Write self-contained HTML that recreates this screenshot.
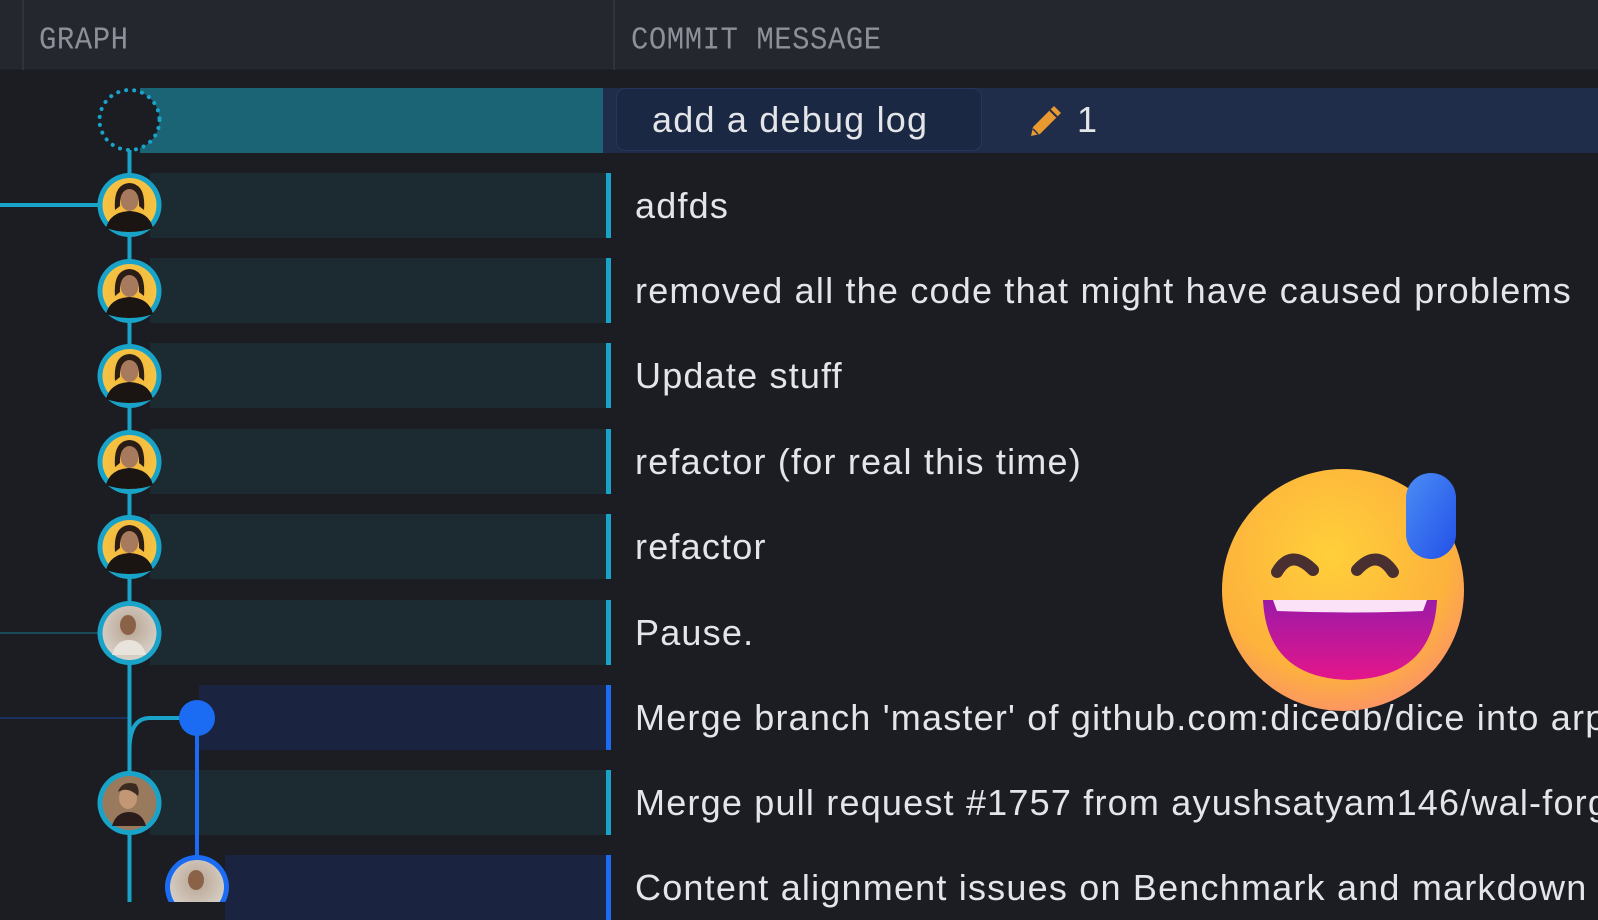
<!DOCTYPE html>
<html><head><meta charset="utf-8"><style>
*{margin:0;padding:0;box-sizing:border-box}
body{width:1598px;height:902px;overflow:hidden;background:#1b1d23;position:relative;font-family:"Liberation Sans","Noto Sans CJK JP",sans-serif}
.hdr{position:absolute;left:0;top:0;width:1598px;height:70px;background:#25272e;border-bottom:1px solid #1f2126}
.hdr span{position:absolute;top:24px;font-family:"Liberation Mono",monospace;font-size:29px;color:#8d9099;letter-spacing:0.5px;transform:scaleY(1.08)}
.vl{position:absolute;top:0;height:70px;width:2px;background:#30333b}
.band{position:absolute;height:65px}
.bar{position:absolute;width:5px;height:65px}
.msg{position:absolute;left:635px;font-size:36px;color:#e4e5e8;letter-spacing:1.2px;white-space:nowrap;line-height:40px}
</style></head><body>
<div class="hdr"><div class="vl" style="left:22px"></div><div class="vl" style="left:613px"></div>
<span style="left:39px">GRAPH</span><span style="left:631px">COMMIT MESSAGE</span></div>

<div class="band" style="left:140px;top:88px;width:463px;background:#1b6475"></div>
<div class="band" style="left:603px;top:88px;width:995px;background:#1f2d4b"></div>
<div style="position:absolute;left:616px;top:88px;width:366px;height:63px;background:#1b2844;border:1px solid #27365a;border-radius:9px"></div>
<div class="msg" style="left:652px;top:100px">add a debug log</div>
<div class="msg" style="left:1077px;top:100px">1</div>
<svg style="position:absolute;left:1028px;top:103px" width="36" height="36" viewBox="0 0 36 36"><path d="M26 3l7 7L12 31 3 33l2-9z" fill="#e89a30"/><path d="M22 7l7 7" stroke="#1f2d4b" stroke-width="2"/><path d="M5 26l5 5" stroke="#1f2d4b" stroke-width="1.5"/></svg>

<div class="band" style="left:150px;top:173px;width:456px;background:#1c2a31"></div><div class="bar" style="left:606px;top:173px;background:#19a3c9"></div>
<div class="band" style="left:150px;top:258px;width:456px;background:#1c2a31"></div><div class="bar" style="left:606px;top:258px;background:#19a3c9"></div>
<div class="band" style="left:150px;top:343px;width:456px;background:#1c2a31"></div><div class="bar" style="left:606px;top:343px;background:#19a3c9"></div>
<div class="band" style="left:150px;top:429px;width:456px;background:#1c2a31"></div><div class="bar" style="left:606px;top:429px;background:#19a3c9"></div>
<div class="band" style="left:150px;top:514px;width:456px;background:#1c2a31"></div><div class="bar" style="left:606px;top:514px;background:#19a3c9"></div>
<div class="band" style="left:150px;top:600px;width:456px;background:#1c2a31"></div><div class="bar" style="left:606px;top:600px;background:#19a3c9"></div>
<div class="band" style="left:199px;top:685px;width:407px;background:#1a2340"></div><div class="bar" style="left:606px;top:685px;background:#1b6cf2"></div>
<div class="band" style="left:150px;top:770px;width:456px;background:#1c2a31"></div><div class="bar" style="left:606px;top:770px;background:#19a3c9"></div>
<div class="band" style="left:225px;top:855px;width:381px;background:#1a2340"></div><div class="bar" style="left:606px;top:855px;background:#1b6cf2"></div>

<div class="msg" style="top:186px">adfds</div>
<div class="msg" style="top:271px">removed all the code that might have caused problems</div>
<div class="msg" style="top:356px">Update stuff</div>
<div class="msg" style="top:442px">refactor (for real this time)</div>
<div class="msg" style="top:527px">refactor</div>
<div class="msg" style="top:613px">Pause.</div>
<div class="msg" style="top:698px">Merge branch 'master' of github.com:dicedb/dice into arpit</div>
<div class="msg" style="top:783px">Merge pull request #1757 from ayushsatyam146/wal-forge</div>
<div class="msg" style="top:868px">Content alignment issues on Benchmark and markdown</div>

<svg style="position:absolute;left:0;top:0" width="600" height="902">
<defs>
<radialGradient id="y" cx="50%" cy="45%" r="55%"><stop offset="0" stop-color="#f2b33a"/><stop offset="1" stop-color="#f6c544"/></radialGradient>
<radialGradient id="b" cx="50%" cy="40%" r="60%"><stop offset="0" stop-color="#b8a392"/><stop offset="1" stop-color="#d8d2c8"/></radialGradient>
</defs>
<line x1="0" y1="205" x2="100" y2="205" stroke="#19a3c9" stroke-width="4"/>
<line x1="0" y1="633" x2="100" y2="633" stroke="#1a5a68" stroke-width="1.5"/>
<line x1="0" y1="718" x2="130" y2="718" stroke="#1c3a72" stroke-width="1.5"/>
<line x1="129.5" y1="150" x2="129.5" y2="902" stroke="#19a3c9" stroke-width="4"/>
<path d="M129.5 750 Q129.5 718 150 718 L197 718" fill="none" stroke="#19a3c9" stroke-width="4"/>
<line x1="197" y1="718" x2="197" y2="870" stroke="#1b6cf2" stroke-width="4"/>
<circle cx="197" cy="718" r="18" fill="#1b6cf2"/>
<circle cx="129.5" cy="120" r="30" fill="#1b1d23" stroke="#19a3c9" stroke-width="4" stroke-dasharray="0.1 8" stroke-linecap="round"/>
<g id="n">
<circle cx="129.5" cy="205" r="32" fill="#19a3c9"/><circle cx="129.5" cy="205" r="27" fill="url(#y)"/>
<path d="M106 228 Q110 212 129.5 211 Q149 212 153 228 Q142 232 129.5 232 Q117 232 106 228z" fill="#1a1512"/>
<path d="M115 210 Q113 184 129.5 183 Q146 184 144 210 L139 206 Q140 192 129.5 192 Q119 192 120 206z" fill="#2a1d16"/>
<ellipse cx="129.5" cy="200" rx="9" ry="11" fill="#a77a5e"/>
</g>
<use href="#n" y="86"/><use href="#n" y="171"/><use href="#n" y="257"/><use href="#n" y="342"/>
<circle cx="129.5" cy="633" r="32" fill="#19a3c9"/><circle cx="129.5" cy="633" r="27" fill="url(#b)"/><ellipse cx="128" cy="625" rx="8" ry="10" fill="#8a6248"/><path d="M112 655 Q116 640 129 640 Q142 640 146 655z" fill="#e8e4dc"/>
<circle cx="129.5" cy="803" r="32" fill="#19a3c9"/><circle cx="129.5" cy="803" r="27" fill="#9a7a5c"/><ellipse cx="128" cy="798" rx="9" ry="11" fill="#c29776"/><path d="M118 792 Q122 780 136 784 Q140 790 138 796 Q128 786 118 792z" fill="#3a2a20"/><path d="M112 826 Q116 812 129 812 Q142 812 146 826z" fill="#2a1c1a"/>
<circle cx="197" cy="887" r="32" fill="#1b6cf2"/><circle cx="197" cy="887" r="27" fill="url(#b)"/><ellipse cx="196" cy="880" rx="8" ry="10" fill="#8a6248"/>
</svg>

<svg style="position:absolute;left:1215px;top:468px" width="260" height="250" viewBox="0 0 260 250">
<defs>
<radialGradient id="f" cx="45%" cy="35%" r="70%"><stop offset="0" stop-color="#ffcf3a"/><stop offset="0.7" stop-color="#fdb23c"/><stop offset="1" stop-color="#fb8f6c"/></radialGradient>
<linearGradient id="m" x1="0" y1="0" x2="0" y2="1"><stop offset="0" stop-color="#9c1aa8"/><stop offset="1" stop-color="#e4168a"/></linearGradient>
<linearGradient id="d" x1="0" y1="0" x2="1" y2="1"><stop offset="0" stop-color="#4a8df5"/><stop offset="1" stop-color="#2350e8"/></linearGradient>
</defs>
<circle cx="128" cy="122" r="121" fill="url(#f)"/>
<path d="M48 132 L222 132 Q218 210 134 212 Q52 210 48 132z" fill="url(#m)"/>
<path d="M58 132 L212 132 L208 143 Q134 146 62 143z" fill="#fbe2f6"/>
<path d="M62 104 Q76 80 98 102" fill="none" stroke="#4a2f30" stroke-width="12" stroke-linecap="round"/>
<path d="M142 102 Q162 80 178 104" fill="none" stroke="#4a2f30" stroke-width="12" stroke-linecap="round"/>
<rect x="191" y="5" width="50" height="86" rx="25" fill="url(#d)"/>
</svg>
</body></html>
